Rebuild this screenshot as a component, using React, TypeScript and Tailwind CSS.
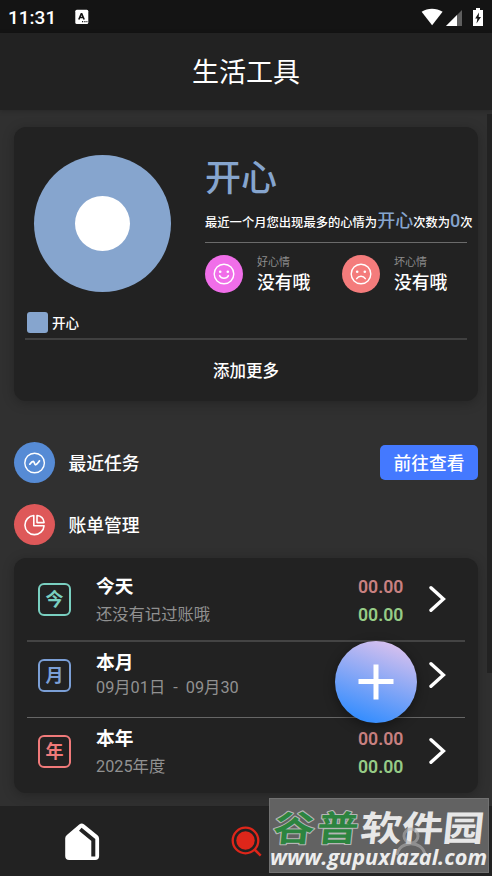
import type { ReactNode } from 'react'

const records = [
  {
    mark: '今',
    title: '今天',
    note: '还没有记过账哦',
    markStyle: 'border-[#79cfc0] text-[#79cfc0]',
    noteStyle: 'mt-[2px]',
  },
  {
    mark: '月',
    title: '本月',
    note: '09月01日  -  09月30',
    markStyle: 'border-[#7b9fd6] text-[#7b9fd6]',
    noteStyle: '-mt-px',
  },
  {
    mark: '年',
    title: '本年',
    note: '2025年度',
    markStyle: 'border-[#f07a7a] text-[#f07a7a]',
    noteStyle: 'mt-[2px]',
  },
]

function StatusBar() {
  return (
    <div className="flex h-[33px] shrink-0 items-center bg-[#141414] pl-[8px] pr-[9px]">
      <span className="w-[67px] pt-[2px] text-[19px] font-medium leading-6">11:31</span>
      <svg className="mt-px" width="14" height="16" viewBox="0 0 14 16">
        <rect x="0.3" y="0.7" width="13" height="14.3" rx="1.5" fill="#fff" />
        <path d="M3.8 10.5 6.5 4.2 9.2 10.5M4.7 8.5h3.6" fill="none" stroke="#141414" strokeWidth="1.6" strokeLinejoin="bevel" />
        <path d="M7 12.7h1.2M9.3 12.7h1.2M11.4 12.7h1" stroke="#141414" strokeWidth="1.2" />
      </svg>
      <svg className="ml-auto" width="63" height="20" viewBox="420 6 63 20">
        <path d="M421.6 10.8C427.8 6.8 436.2 6.8 442.6 10.8L432.1 24.2Z" fill="#fff" />
        <path d="M446 25 462 9V25Z" fill="#5e5e5e" />
        <path d="M446 25 457 14V25Z" fill="#fff" />
        <path d="M476 7h4v2h3v16h-10V9h3z" fill="#fff" />
        <path d="M479 11.5 475.2 17.5H477.4L476.5 22.5 481 16H478.7Z" fill="#141414" />
      </svg>
    </div>
  )
}

function Face({ sad = false }: { sad?: boolean }) {
  return (
    <svg width="22" height="22" viewBox="0 0 22 22" fill="none" stroke="#fff">
      <circle cx="11" cy="11" r="9.8" strokeWidth="1.4" />
      <circle cx="7.2" cy="8.8" r="1.3" fill="#fff" stroke="none" />
      <circle cx="14.8" cy="8.8" r="1.3" fill="#fff" stroke="none" />
      <path
        d={sad ? 'M6.7 15.7c2-3.3 6.6-3.3 8.6 0' : 'M6.6 12.6c1.6 3.5 7.2 3.5 8.8 0'}
        strokeWidth="1.5"
        strokeLinecap="round"
      />
    </svg>
  )
}

function Mood({ label, sad, color }: { label: string; sad?: boolean; color: string }) {
  return (
    <div className="flex w-[137px]">
      <div className={`flex size-[38px] items-center justify-center rounded-full ${color}`}>
        <Face sad={sad} />
      </div>
      <div className="ml-[14px] pt-px">
        <div className="text-[11px] leading-[14px] text-[#8c8c8c]">{label}</div>
        <div className="text-[17.8px] font-medium leading-[26px]">没有哦</div>
      </div>
    </div>
  )
}

function MoodCard() {
  return (
    <section className="h-[274px] rounded-xl bg-[#222] shadow-[0_2px_12px_rgba(0,0,0,0.25)]">
      <div className="flex h-[185px] pl-5">
        <div className="mt-7 flex size-[137px] shrink-0 items-center justify-center rounded-full bg-[#86a5ce]">
          <div className="size-[55px] rounded-full bg-white" />
        </div>
        <div className="ml-[34px] whitespace-nowrap">
          <h2 className="mt-[26px] h-[50px] text-[36px] font-medium leading-[52px] text-[#86a5ce]">开心</h2>
          <p className="h-[39px] text-[12.3px] font-medium leading-9">
            最近一个月您出现最多的心情为
            <span className="text-[18px] text-[#86a5ce]">开心</span>次数为
            <span className="text-[18px] text-[#86a5ce]">0</span>次
          </p>
          <div className="h-px w-[262px] bg-[#6b6b6b]" />
          <div className="mt-3 flex">
            <Mood label="好心情" color="bg-[#f06ee9]" />
            <Mood label="坏心情" color="bg-[#f47c7c]" sad />
          </div>
        </div>
      </div>
      <div className="flex h-[21px] items-center pl-[13px]">
        <span className="size-[21px] rounded-[3px] bg-[#86a5ce]" />
        <span className="ml-1 text-[13.5px] font-medium leading-5">开心</span>
      </div>
      <div className="ml-[11px] mr-[11px] mt-[5px] h-[2px] bg-[#404040]" />
      <div className="mt-[20px] text-center text-[16.5px] font-medium leading-6">添加更多</div>
    </section>
  )
}

function SectionTitle({ title, color, icon, children }: { title: string; color: string; icon: ReactNode; children?: ReactNode }) {
  return (
    <div className="flex h-[41px] items-center">
      <div className={`flex size-[41px] items-center justify-center rounded-full ${color}`}>{icon}</div>
      <h3 className="ml-[13.5px] pt-[3px] text-[17.8px] font-medium leading-6">{title}</h3>
      {children}
    </div>
  )
}

function TrendIcon() {
  return (
    <svg width="22" height="22" viewBox="0 0 22 22" fill="none" stroke="#fff" strokeLinecap="round" strokeLinejoin="round">
      <circle cx="10.6" cy="11" r="9.8" strokeWidth="1.4" />
      <path d="M5.8 12.2C7 10.4 8.3 9.3 9.3 9.3 10.5 9.5 10.3 13 11.6 12.8 12.8 12.5 14.2 10.5 15.5 8.9" strokeWidth="1.7" />
    </svg>
  )
}

function PieIcon() {
  return (
    <svg width="22" height="22" viewBox="0 0 22 22" fill="none" stroke="#fff" strokeWidth="1.6" strokeLinejoin="round">
      <path d="M9.8 1.5v10.3h10.3A9.6 9.6 0 1 1 9.8 1.5Z" />
      <path d="M13 1.5v7.1h7.1c-.4-3.9-3.2-6.7-7.1-7.1Z" />
    </svg>
  )
}

function RecordCard() {
  return (
    <section className="relative mt-[13px] h-[235px] rounded-xl bg-[#222] px-[13px] pt-[6px] shadow-[0_2px_12px_rgba(0,0,0,0.25)]">
      {records.map((r, i) => (
        <div
          key={r.mark}
          className={`flex h-[78px] -mb-[2px] pl-[11px] ${i === 0 ? 'border-b-2 border-[#444]' : i === 1 ? 'border-b border-[#666]' : ''}`}
        >
          <div
            className={`mt-[19px] flex size-[33px] items-center justify-center rounded-[6px] border-2 pt-px text-[18px] font-bold leading-none ${r.markStyle}`}
          >
            {r.mark}
          </div>
          <div className="ml-[25px] mt-[10px] whitespace-pre">
            <div className="text-[18.7px] font-bold leading-[26px]">{r.title}</div>
            <div className={`text-[16.3px] leading-[26px] text-[#919191] ${r.noteStyle}`}>{r.note}</div>
          </div>
          <div className="ml-auto mt-[9px] w-[71px] text-[17.7px] font-semibold leading-7">
            <div className="text-[#c98181]">00.00</div>
            <div className="text-[#96cb86]">00.00</div>
          </div>
          <svg className="mr-[19px] mt-[21px]" width="17" height="28" viewBox="0 0 17 28" fill="none">
            <path d="M2 2.7 14.4 14 2 25.3" stroke="#fff" strokeWidth="3.4" strokeLinecap="round" />
          </svg>
        </div>
      ))}
      {/* Floating add button */}
      <button className="absolute left-[321px] top-[82.5px] flex size-[82px] items-center justify-center rounded-full bg-[linear-gradient(200deg,#e0c3ed_5%,#2d8bff_93%)] shadow-[0_3px_12px_rgba(0,0,0,0.4)]">
        <svg width="36" height="36" viewBox="0 0 36 36">
          <path d="M18 .5v35M.5 17.5h35" stroke="#fff" strokeWidth="5" />
        </svg>
      </button>
    </section>
  )
}

function TabBar() {
  return (
    <nav className="flex h-[70px] shrink-0 items-center justify-around bg-[#222] pr-[2px]">
      <svg width="36" height="38" viewBox="0.5 0 36 38" className="mt-[2px]">
        <path
          d="M14.7 1.4a4 4 0 0 1 5 0L33 12.3q1.6 1.4 1.6 3.5V33q0 4-4 4H4.7q-4 0-4-4V15.3q0-2.1 1.7-3.4z"
          fill="#fff"
        />
        <path d="M15.8 6.3 28.8 17V33.5" fill="none" stroke="#222" strokeWidth="4" />
      </svg>
      <svg width="32" height="32" viewBox="0 0 32 32" className="mt-[2px]">
        <circle cx="14.5" cy="14.5" r="9.2" fill="#de261a" />
        <circle cx="14.5" cy="14.5" r="12.8" fill="none" stroke="#de261a" strokeWidth="2.3" />
        <path d="M23.5 23.5 29.7 29.7" stroke="#de261a" strokeWidth="2.5" />
      </svg>
      <svg width="32" height="32" viewBox="0 0 32 32" fill="none" stroke="#aaa" strokeWidth="3">
        <circle cx="16" cy="9" r="7" />
        <path d="M3 29c0-17 26-17 26 0" />
      </svg>
    </nav>
  )
}

function Watermark() {
  return (
    <div className="absolute left-[269px] top-[798px] h-[75px] w-[220px] border border-[#727272] bg-[#626262]">
      <svg width="218" height="73" viewBox="270 799 218 73">
        <g
          fontFamily="'Noto Sans CJK SC', sans-serif"
          fontSize="40"
          fontWeight="700"
          paintOrder="stroke"
          strokeLinejoin="round"
          transform="translate(272 841) skewX(-6) scale(1.04 0.88)"
        >
          <text x="0" y="0" fill="#2c843f" stroke="#b5b5b5" strokeWidth="2.4" textLength="82">谷普</text>
          <text x="84" y="0" fill="#e7e7e7" textLength="119">软件园</text>
        </g>
        <g fill="none" stroke="#b0b0b0" strokeWidth="3" opacity="0.6">
          <circle cx="411" cy="836" r="7" />
          <path d="M397 855c2-15 26-15 28 0" />
        </g>
        <text
          x="270"
          y="865"
          fill="#ededed"
          fontFamily="'Open Sans', sans-serif"
          fontSize="21.5"
          fontWeight="700"
          fontStyle="italic"
          textLength="217"
          lengthAdjust="spacingAndGlyphs"
        >
          www.gupuxlazal.com
        </text>
      </svg>
    </div>
  )
}

export default function App() {
  return (
    <div className="relative flex h-[876px] w-[492px] flex-col overflow-hidden bg-[#303030] font-[Roboto,'Noto_Sans_CJK_SC',sans-serif] text-white">
      <StatusBar />
      <header className="flex h-[77px] shrink-0 items-center justify-center bg-[#222] shadow-[0_1px_5px_rgba(0,0,0,0.2)]">
        <h1 className="pt-[2px] text-[27px] leading-10">生活工具</h1>
      </header>
      <main className="flex-1 px-[14px] pt-[17px]">
        <MoodCard />
        <div className="mt-[41px] flex flex-col gap-[21px]">
          <SectionTitle title="最近任务" color="bg-[#568bd5]" icon={<TrendIcon />}>
            <button className="ml-auto h-[35px] w-[98px] rounded-[5px] bg-[#4479ff] pt-[3px] text-[17.7px] font-medium">
              前往查看
            </button>
          </SectionTitle>
          <SectionTitle title="账单管理" color="bg-[#de5859]" icon={<PieIcon />} />
        </div>
        <RecordCard />
      </main>
      <TabBar />
      {/* Scroll thumb */}
      <div className="absolute right-0 top-[114px] h-[559px] w-[5px] bg-[#222]" />
      <Watermark />
    </div>
  )
}
